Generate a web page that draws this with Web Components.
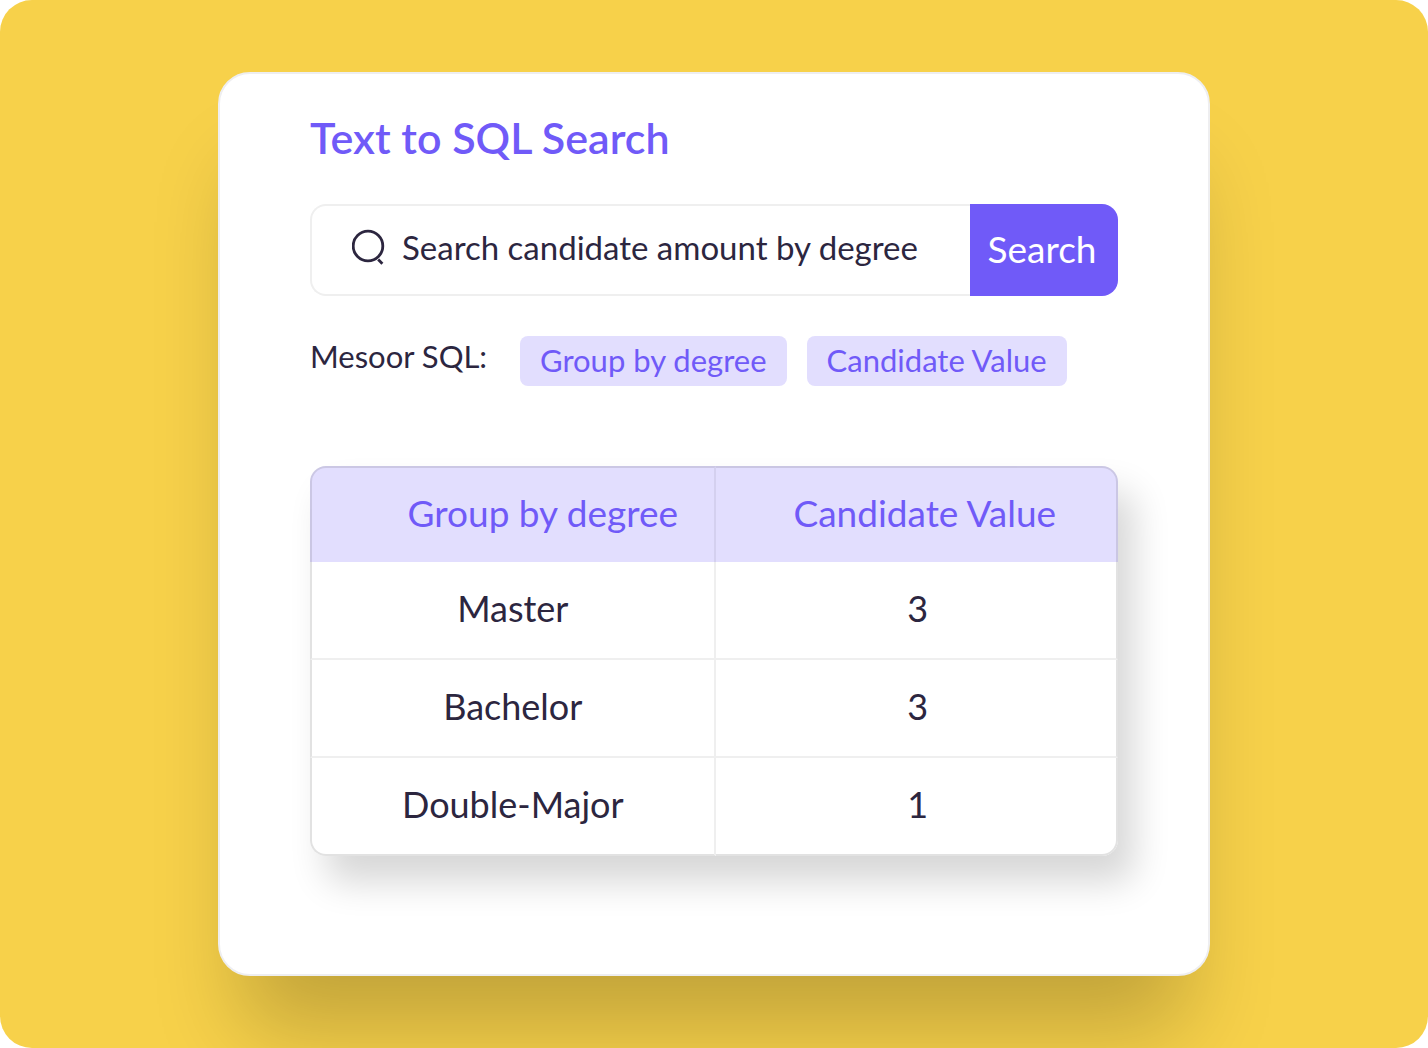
<!DOCTYPE html>
<html lang="en">
<head>
<meta charset="utf-8">
<meta name="viewport" content="width=device-width, initial-scale=1">
<title>Text to SQL Search</title>
<style>
  body {
    margin: 0;
    background: #fff;
    color: #2c263f;
    font-family: Lato, "Noto Sans", sans-serif;
    --color-primary: #705af8;
    --color-tint: #e2defe;
    --color-line: #efefef;
  }
</style>
</head>
<body>
<sql-stage>
  <sql-card heading="Text to SQL Search">
    <sql-search value="Search candidate amount by degree"></sql-search>
    <sql-tags label="Mesoor SQL:">
      <sql-tag>Group by degree</sql-tag>
      <sql-tag>Candidate Value</sql-tag>
    </sql-tags>
    <sql-result></sql-result>
  </sql-card>
</sql-stage>

<script>
class SqlStage extends HTMLElement {
  constructor() {
    super();
    this.attachShadow({ mode: 'open' })
    this.shadowRoot.innerHTML = `
    <style>
      :host {
        display: flex;
        justify-content: center;
        align-items: center;
        box-sizing: border-box;
        min-height: 100vh;
        padding: 72px 24px;
        overflow: hidden;
        background: #f7d14a;
        border-radius: 32px;
      }
    </style>
    <slot></slot>`;
  }
}

class SqlCard extends HTMLElement {
  constructor() {
    super();
    this.attachShadow({ mode: 'open' })
    this.shadowRoot.innerHTML = `
    <style>
      :host {
        display: block;
        box-sizing: border-box;
        width: 100%;
        max-width: 992px;
        padding: 40px 90px 118px;
        background: #fff;
        border: 2px solid #eeeef0;
        border-radius: 32px;
        box-shadow: 0 76px 88px -24px rgba(0, 0, 0, 0.22);
      }

      h1 {
        margin: 0 0 42px;
        color: var(--color-primary);
        font-size: 43px;
        font-weight: 600;
        line-height: 48px;
      }
    </style>
    <h1></h1>
    <slot></slot>`;
  }

  connectedCallback() {
    this.shadowRoot.querySelector('h1').textContent = this.getAttribute('heading');
  }
}

class SqlSearch extends HTMLElement {
  constructor() {
    super();
    this.attachShadow({ mode: 'open' })
    this.shadowRoot.innerHTML = `
    <style>
      :host {
        display: block;
      }

      form {
        display: flex;
        height: 92px;
      }

      label {
        display: flex;
        flex: 1;
        align-items: center;
        gap: 16px;
        min-width: 0;
        padding: 0 12px 6px 40px;
        border: 2px solid var(--color-line);
        border-right: 0;
        border-radius: 16px 0 0 16px;
      }

      svg {
        flex: none;
        width: 34px;
        height: 36px;
      }

      input {
        flex: 1;
        min-width: 0;
        padding: 0;
        border: 0;
        outline: 0;
        background: none;
        color: inherit;
        font: inherit;
        font-size: 33px;
        line-height: 40px;
      }

      button {
        flex: none;
        width: 148px;
        padding: 0 4px 4px 0;
        border: 0;
        border-radius: 0 16px 16px 0;
        background: var(--color-primary);
        color: #fff;
        font: inherit;
        font-size: 37px;
        cursor: pointer;
      }
    </style>
    <form>
      <label>
        <svg viewBox="0 0 34 36" fill="none" stroke="currentColor" stroke-width="2.8" aria-hidden="true">
          <circle cx="16" cy="17" r="14.8"/>
          <path d="M26.2 30.6l4.2 4.2"/>
        </svg>
        <input type="text" aria-label="Search query">
      </label>
      <button type="submit">Search</button>
    </form>`;
  }

  connectedCallback() {
    this.shadowRoot.querySelector('input').value = this.getAttribute('value');
    this.shadowRoot.querySelector('form').addEventListener('submit', (e) => e.preventDefault())
  }
}

class SqlTags extends HTMLElement {
  constructor() {
    super();
    this.attachShadow({ mode: 'open' })
    this.shadowRoot.innerHTML = `
    <style>
      :host {
        display: flex;
        flex-wrap: wrap;
        gap: 20px;
        margin: 40px 0 80px;
      }

      span {
        width: 190px;
        font-size: 31px;
        line-height: 40px;
        white-space: nowrap;
      }
    </style>
    <span></span>
    <slot></slot>`;
  }

  connectedCallback() {
    this.shadowRoot.querySelector('span').textContent = this.getAttribute('label');
  }
}

class SqlTag extends HTMLElement {
  constructor() {
    super();
    this.attachShadow({ mode: 'open' })
    this.shadowRoot.innerHTML = `
    <style>
      :host {
        display: block;
        padding: 0 20px 2px;
        border-radius: 8px;
        background: var(--color-tint);
        color: var(--color-primary);
        font-size: 31px;
        line-height: 48px;
        white-space: nowrap;
      }
    </style>
    <slot></slot>`;
  }
}

class SqlResult extends HTMLElement {
  constructor() {
    super();
    this._columns = ['Group by degree', 'Candidate Value'];
    this._rows = [
      ['Master', 3],
      ['Bachelor', 3],
      ['Double-Major', 1]
    ];
    this.attachShadow({ mode: 'open' })
    this.shadowRoot.innerHTML = `
    <style>
      :host {
        display: block;
        border-radius: 16px;
        box-shadow: 16px 26px 36px rgba(0, 0, 0, 0.16);
      }

      table {
        width: 100%;
        border-spacing: 0;
        table-layout: fixed;
        font-size: 36px;
        line-height: 44px;
        text-align: center;
      }

      th,
      td {
        box-sizing: border-box;
        padding: 0 0 4px;
        border: 0 solid var(--color-line);
        border-right-width: 2px;
      }

      th {
        height: 96px;
        border-top-width: 2px;
        border-color: rgba(0, 0, 0, 0.1);
        background: var(--color-tint);
        color: var(--color-primary);
        font-size: 37px;
        font-weight: 400;
      }

      th:first-child {
        width: 50.2%;
        padding-left: 60px;
        border-right-color: rgba(0, 0, 0, 0.06);
        border-top-left-radius: 16px;
      }

      th:last-child {
        padding-left: 18px;
        border-top-right-radius: 16px;
      }

      td {
        height: 98px;
        border-bottom-width: 2px;
        background: #fff;
      }

      td:last-child {
        padding-left: 4px;
      }

      th:first-child,
      td:first-child {
        border-left-width: 2px;
      }

      td:first-child {
        border-left-color: #e2e2e2;
      }

      td:last-child {
        border-right-color: #e2e2e2;
      }

      tr:last-child td {
        border-bottom-color: #e2e2e2;
      }

      tr:last-child td:first-child {
        border-bottom-left-radius: 16px;
      }

      tr:last-child td:last-child {
        border-bottom-right-radius: 16px;
      }
    </style>
    <table>
      <thead><tr></tr></thead>
      <tbody></tbody>
    </table>`;
  }

  connectedCallback() {
    this.shadowRoot.querySelector('thead tr').innerHTML =
      this._columns.map((name) => `<th scope="col">${name}</th>`).join('');
    this.shadowRoot.querySelector('tbody').innerHTML =
      this._rows.map((row) => `<tr>${row.map((cell) => `<td>${cell}</td>`).join('')}</tr>`).join('');
  }
}

customElements.define('sql-stage', SqlStage)
customElements.define('sql-card', SqlCard)
customElements.define('sql-search', SqlSearch)
customElements.define('sql-tags', SqlTags)
customElements.define('sql-tag', SqlTag)
customElements.define('sql-result', SqlResult)
</script>
</body>
</html>
